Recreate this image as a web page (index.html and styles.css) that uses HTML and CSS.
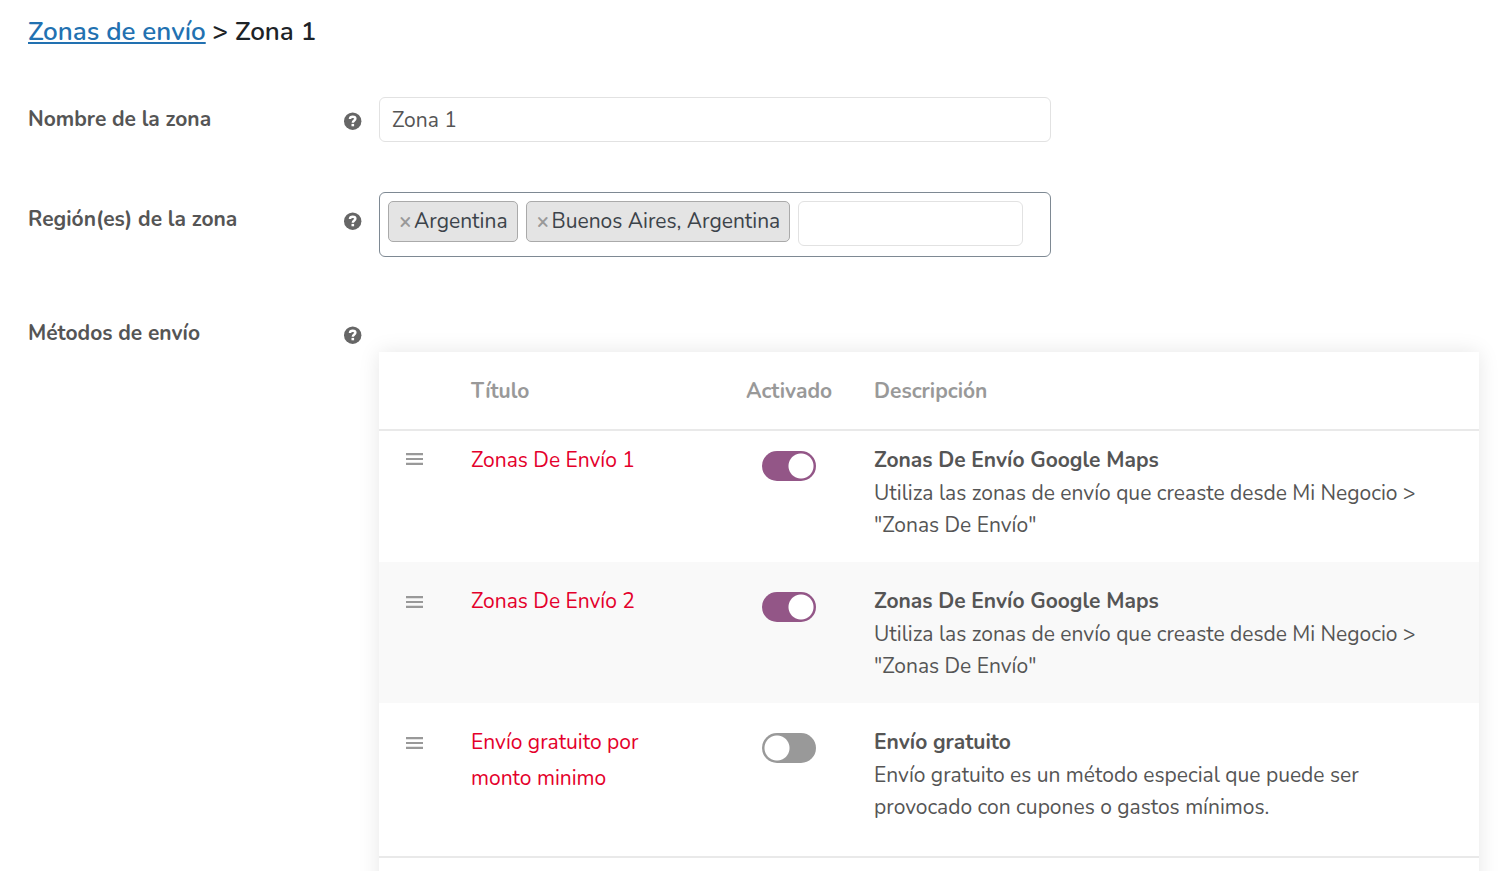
FILE: index.html
```html
<!DOCTYPE html>
<html lang="es">
<head>
<meta charset="utf-8">
<title>Zonas de envío</title>
<link rel="stylesheet" href="styles.css">
</head>
<body>
<svg class="sprite" aria-hidden="true">
  <symbol id="help" viewBox="0 0 18 18">
    <circle cx="8.7" cy="9.2" r="8.7" fill="#666"/>
    <path d="M5.9 7C6 5.4 7.1 4.7 8.7 4.7C10.4 4.7 11.4 5.5 11.4 6.8C11.4 8.5 8.8 8.5 8.8 10.8" fill="none" stroke="#fff" stroke-width="2.4"/>
    <rect x="7.5" y="11.9" width="2.6" height="2.4" fill="#fff"/>
  </symbol>
  <symbol id="sort" viewBox="0 0 17 12">
    <path d="M0 1.2h17M0 6h17M0 10.8h17" stroke="#999" stroke-width="2.2"/>
  </symbol>
</svg>
<main class="page">
  <h2 class="heading"><a href="#">Zonas de envío</a> &gt; Zona 1</h2>
  <form class="form">
    <div class="row">
      <label class="label" for="zone-name">Nombre de la zona</label>
      <svg class="help"><use href="#help"/></svg>
      <div class="field"><input class="input" id="zone-name" type="text" value="Zona 1"></div>
    </div>
    <div class="row">
      <label class="label" for="zone-regions">Región(es) de la zona</label>
      <svg class="help"><use href="#help"/></svg>
      <div class="field field-regions">
        <div class="select">
          <span class="chip"><button class="remove" type="button" aria-label="Quitar Argentina">×</button>Argentina</span>
          <span class="chip"><button class="remove" type="button" aria-label="Quitar Buenos Aires">×</button>Buenos Aires, Argentina</span>
          <input class="input search" id="zone-regions" type="text">
        </div>
      </div>
    </div>
    <div class="row">
      <span class="label">Métodos de envío</span>
      <svg class="help"><use href="#help"/></svg>
      <div class="field field-methods">
        <table class="methods">
          <colgroup><col class="col-sort"><col class="col-title"><col class="col-enabled"><col></colgroup>
          <thead>
            <tr><th></th><th class="left">Título</th><th>Activado</th><th class="left desc-head">Descripción</th></tr>
          </thead>
          <tbody>
            <tr>
              <td class="sort"><svg class="handle"><use href="#sort"/></svg></td>
              <td class="title"><a href="#">Zonas De Envío 1</a></td>
              <td class="enabled"><input class="toggle" type="checkbox" aria-label="Zonas De Envío 1" checked></td>
              <td class="desc"><strong>Zonas De Envío Google Maps</strong><p>Utiliza las zonas de envío que creaste desde Mi Negocio &gt; "Zonas De Envío"</p></td>
            </tr>
            <tr>
              <td class="sort"><svg class="handle"><use href="#sort"/></svg></td>
              <td class="title"><a href="#">Zonas De Envío 2</a></td>
              <td class="enabled"><input class="toggle" type="checkbox" aria-label="Zonas De Envío 2" checked></td>
              <td class="desc"><strong>Zonas De Envío Google Maps</strong><p>Utiliza las zonas de envío que creaste desde Mi Negocio &gt; "Zonas De Envío"</p></td>
            </tr>
            <tr>
              <td class="sort"><svg class="handle"><use href="#sort"/></svg></td>
              <td class="title"><a href="#">Envío gratuito por monto minimo</a></td>
              <td class="enabled"><input class="toggle" type="checkbox" aria-label="Envío gratuito por monto minimo"></td>
              <td class="desc"><strong>Envío gratuito</strong><p>Envío gratuito es un método especial que puede ser provocado con cupones o gastos mínimos.</p></td>
            </tr>
          </tbody>
          <tfoot><tr><td colspan="4"></td></tr></tfoot>
        </table>
      </div>
    </div>
  </form>
</main>
</body>
</html>
```
FILE: styles.css
```css
* { box-sizing: border-box; }
body {
  margin: 0;
  background: #fff;
  color: #555;
  font: 400 21px/32px Nunito, "Open Sans", sans-serif;
}
.sprite { display: none; }
.page { height: 100vh; padding: 12px 28px 0; overflow: hidden; }
.heading {
  margin: 0 0 35px;
  color: #1d2327;
  font-size: 26px;
  font-weight: 600;
  line-height: 40px;
}
.heading a { color: #2271b1; text-decoration-thickness: 2px; text-underline-offset: 2px; }
.row {
  display: grid;
  grid-template-columns: 316px 18px minmax(0, 1fr);
  align-items: start;
}
.label { padding-top: 16px; font-weight: 700; }
.help { width: 18px; height: 18px; margin-top: 25px; }
.field { padding: 10px 0 45px 17px; }
.field-regions { padding: 5px 0 44px 17px; }
.field-methods { padding: 51px 0 0 17px; }
.input {
  display: block;
  width: 100%;
  max-width: 672px;
  height: 45px;
  padding: 0 12px;
  border: 1px solid #e2e2e2;
  border-radius: 6px;
  background: #fff;
  color: #555;
  font: inherit;
}
.select {
  display: flex;
  align-items: flex-start;
  gap: 8px;
  max-width: 672px;
  padding: 8px 8px 10px;
  border: 1px solid #7e8993;
  border-radius: 6px;
}
.search { width: 225px; }
.chip {
  display: flex;
  align-items: center;
  height: 41px;
  padding: 0 9px 2px 10px;
  border: 1px solid #aaa;
  border-radius: 5px;
  background: #e4e4e4;
  color: #3c434a;
  white-space: nowrap;
}
.remove {
  width: 15px;
  padding: 0;
  border: 0;
  background: none;
  color: #999;
  font: inherit;
  font-weight: 700;
  text-align: left;
}
.methods {
  width: 100%;
  border-spacing: 0;
  table-layout: fixed;
  background: #fff;
  box-shadow: 0 0 20px rgba(0, 0, 0, 0.1);
}
.col-sort { width: 92px; }
.col-title { width: 254px; }
.col-enabled { width: 128px; }
.methods th {
  height: 79px;
  padding: 0;
  border-bottom: 2px solid #e9e9e9;
  color: #999;
  font-weight: 700;
}
.methods td { padding: 0; vertical-align: top; }
.methods .left { text-align: left; }
.methods .desc-head { padding-left: 21px; }
.methods .sort { padding: 34px 0 0 27px; }
.handle { display: block; width: 17px; height: 12px; }
.methods .title { padding: 21px 40px 20px 0; line-height: 36px; }
.title a { color: #e4002b; text-decoration: none; }
.methods .enabled { padding-top: 30px; }
.methods .desc { padding: 22px 40px 21px 21px; }
.desc strong { display: block; font-weight: 700; line-height: 34px; }
.desc p { margin: 0; }
.methods tbody tr:first-child .sort { padding-top: 22px; }
.methods tbody tr:first-child .title { padding-top: 11px; }
.methods tbody tr:first-child .enabled { padding-top: 20px; }
.methods tbody tr:first-child .desc { padding-top: 12px; }
.methods tbody tr:last-child .desc { padding-bottom: 33px; }
.methods tbody tr:nth-child(even) { background: #f9f9f9; }
.toggle {
  display: block;
  width: 54px;
  height: 30px;
  margin: 0 auto;
  border-radius: 15px;
  appearance: none;
  background: radial-gradient(circle at 15px 15px, #fff 12px, #999 13px);
}
.toggle:checked { background: radial-gradient(circle at 39px 15px, #fff 12px, #935687 13px); }
.methods tfoot td { height: 100px; border-top: 2px solid #e9e9e9; }
```
